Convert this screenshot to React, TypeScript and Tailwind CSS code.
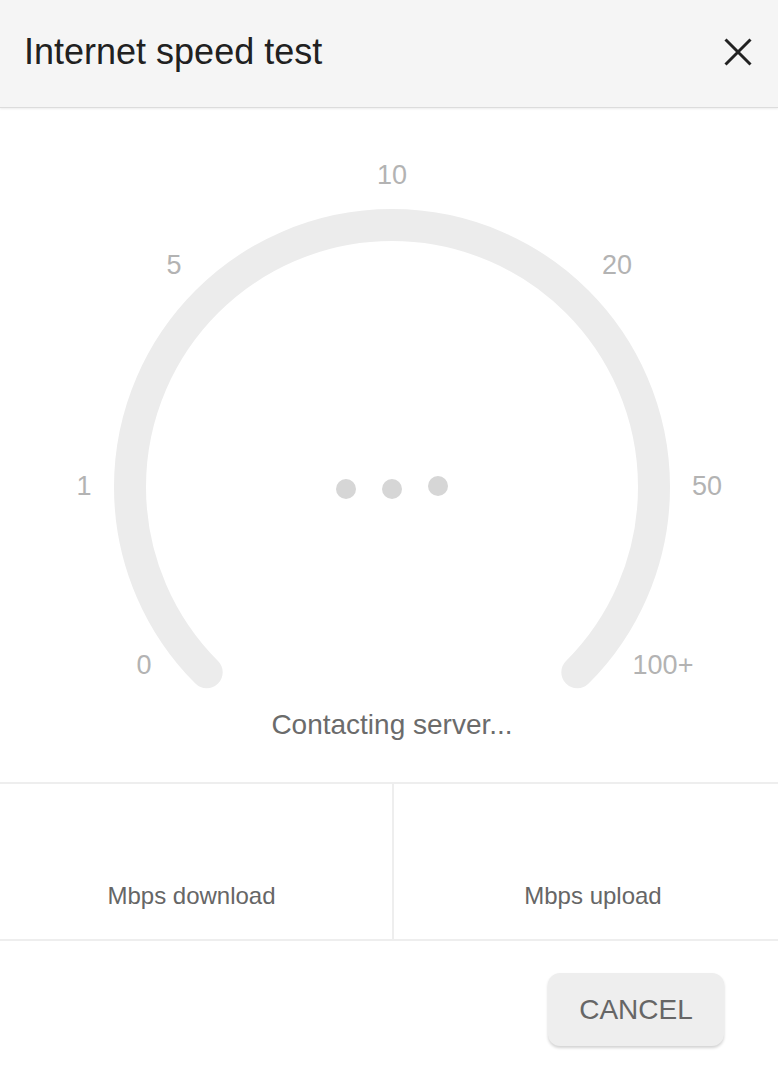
import React from 'react';

const labels = [
  { text: '0', cls: 'left-[144px] top-[557px]' },
  { text: '1', cls: 'left-[84px] top-[378px]' },
  { text: '5', cls: 'left-[174px] top-[157px]' },
  { text: '10', cls: 'left-[392px] top-[67px]' },
  { text: '20', cls: 'left-[617px] top-[157px]' },
  { text: '50', cls: 'left-[707px] top-[378px]' },
  { text: '100+', cls: 'left-[663px] top-[557px]' },
];

const Gauge: React.FC = () => (
  <div className="relative h-[600px] w-full">
    <svg className="absolute inset-0" width="778" height="600" viewBox="0 0 778 600">
      <path
        d="M 206.7 564.3 A 262 262 0 1 1 577.3 564.3"
        fill="none"
        stroke="#ececec"
        strokeWidth="32"
        strokeLinecap="round"
      />
    </svg>
    {labels.map(l => (
      <span
        key={l.text}
        className={`absolute -translate-x-1/2 -translate-y-1/2 text-[27px] leading-none text-[#b3b3b3] ${l.cls}`}
      >
        {l.text}
      </span>
    ))}
    {/* loading dots */}
    <div className="absolute left-[336px] top-[371px] flex items-center gap-[26px]">
      <span className="h-5 w-5 rounded-full bg-[#d6d6d6]" />
      <span className="h-5 w-5 rounded-full bg-[#d6d6d6]" />
      <span className="h-5 w-5 -translate-y-[3px] rounded-full bg-[#d6d6d6]" />
    </div>
  </div>
);

export default function App() {
  return (
    <div className="h-[1072px] w-[778px] bg-white font-['Liberation_Sans',Arial,sans-serif]">
      <div className="flex h-[108px] items-center justify-between border-b border-[#dcdcdc] bg-[#f5f5f5] pl-[24px] pr-[26px] shadow-[0_1px_2px_rgba(0,0,0,0.08)]">
        <h1 className="mb-[3px] text-[36px] leading-none text-[#212121]">Internet speed test</h1>
        <button className="mb-[4px]">
          <svg width="28" height="28" viewBox="0 0 28 28" stroke="#222" strokeWidth="3">
            <path d="M1.5 1.5 26.5 26.5M26.5 1.5 1.5 26.5" />
          </svg>
        </button>
      </div>

      <Gauge />

      <p className="mt-[3px] pl-[6px] text-center text-[28px] leading-[28px] text-[#6b6b6b]">
        Contacting server...
      </p>

      <div className="mt-[43px] grid h-[159px] grid-cols-[392px_1fr] border-y-2 border-[#eeeeee]">
        <div className="flex items-end justify-center pb-[30px] pr-[9px]">
          <span className="text-[24px] leading-[26px] text-[#666]">Mbps download</span>
        </div>
        <div className="flex items-end justify-center border-l-2 border-[#eeeeee] pb-[30px] pl-[14px]">
          <span className="text-[24px] leading-[26px] text-[#666]">Mbps upload</span>
        </div>
      </div>

      <div className="flex justify-end pr-[54px] pt-[32px]">
        <button className="h-[73px] w-[176px] rounded-[12px] bg-[#eeeeee] text-[28px] text-[#666] shadow-[0_2px_3px_rgba(0,0,0,0.18)]">
          CANCEL
        </button>
      </div>
    </div>
  );
}
